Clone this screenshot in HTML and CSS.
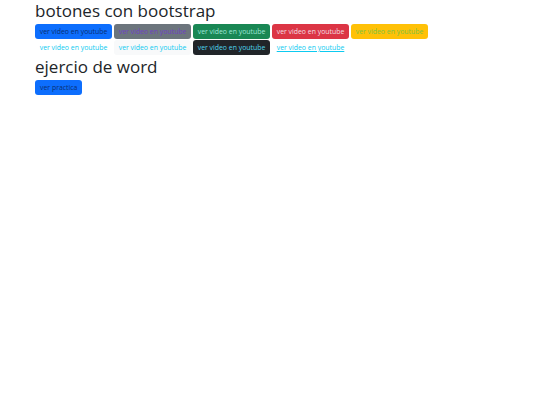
FILE: index.html
```html
<!DOCTYPE html>
<html lang="es">
<head>
<meta charset="utf-8">
<link rel="stylesheet" href="styles.css">
</head>
<body>
<div class="container">
  <h2 class="title">botones con bootstrap</h2>
  <div class="row">
    <button class="btn primary">ver video en youtube</button>
    <button class="btn secondary">ver video en youtube</button>
    <button class="btn success">ver video en youtube</button>
    <button class="btn danger">ver video en youtube</button>
    <button class="btn warning">ver video en youtube</button>
  </div>
  <div class="row">
    <button class="btn white">ver video en youtube</button>
    <button class="btn light">ver video en youtube</button>
    <button class="btn dark">ver video en youtube</button>
    <button class="btn link">ver video en youtube</button>
  </div>
  <h2 class="title">ejercio de word</h2>
  <div class="row">
    <button class="btn primary small">ver practica</button>
  </div>
</div>
</body>
</html>
```
FILE: styles.css
```css
html, body {
  margin: 0;
  padding: 0;
  background: #fff;
}
body {
  font-family: "Open Sans", "Noto Sans", sans-serif;
  color: #212529;
}
.container {
  padding: 0 0 0 35px;
}
.title {
  margin: 0 0 3px;
  font-weight: 400;
  font-size: 17px;
  line-height: 21px;
}
.row {
  display: flex;
  gap: 2px;
  margin-bottom: 1px;
}
.btn {
  font-family: "Open Sans", "Noto Sans", sans-serif;
  font-size: 6.9px;
  line-height: 9px;
  padding: 3px 4px;
  border: 0;
  border-radius: 3px;
  width: 77px;
  white-space: nowrap;
  text-align: center;
}
.primary { background: #0d6efd; color: #0a2e73; }
.secondary { background: #6c757d; color: #6f42c1; }
.success { background: #198754; color: #9ee6d8; }
.danger { background: #dc3545; color: #f3dfe1; }
.warning { background: #ffc107; color: #7cc243; }
.white { background: #fff; color: #0dcaf0; }
.light { background: #f8f9fa; color: #0dcaf0; }
.dark { background: #212529; color: #4fd6ee; }
.link { background: transparent; color: #0dcaf0; text-decoration: underline; }
.small { width: auto; padding: 3px 5px; }
```
